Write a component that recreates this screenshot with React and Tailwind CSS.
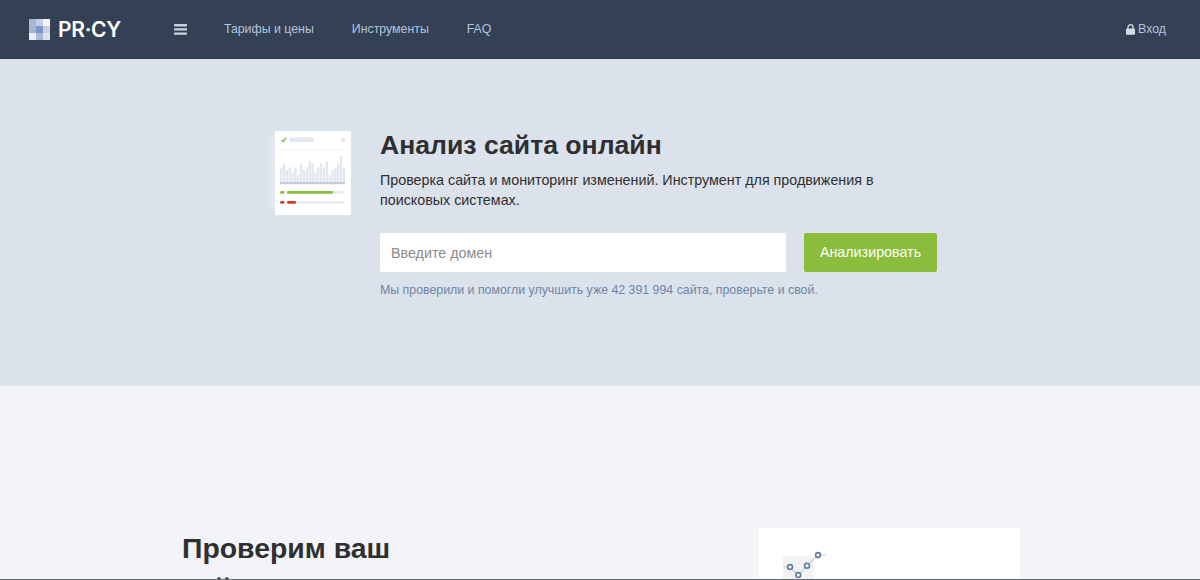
import React from 'react';

// bar heights of the small chart on the hero picture
const bars = [14.5, 18.5, 12, 14.5, 9.5, 14.5, 7, 18.5, 12, 14.5, 21, 18.5, 9.5, 14.5, 18.5, 14.5, 21, 7, 12, 14.5, 18.5, 26, 14.5];

const LogoMark = () => (
    <svg width="21" height="21" viewBox="0 0 21 21" className="shrink-0">
        <rect x="0" y="0" width="7" height="7" fill="#a9b7d6" />
        <rect x="7" y="0" width="7" height="7" fill="#c5cfe3" />
        <rect x="14" y="0" width="7" height="7" fill="#f4f6fa" />
        <rect x="0" y="7" width="7" height="7" fill="#a3b3d4" />
        <rect x="7" y="7" width="7" height="7" fill="#7d95c8" />
        <rect x="14" y="7" width="7" height="7" fill="#c9d2e5" />
        <rect x="0" y="14" width="7" height="7" fill="#e9edf4" />
        <rect x="7" y="14" width="7" height="7" fill="#a9b7d6" />
        <rect x="14" y="14" width="7" height="7" fill="#dde3ef" />
    </svg>
);

const HeroPicture = () => (
    <svg width="83" height="84" viewBox="0 0 83 84" className="shrink-0">
        <rect x="0" y="6" width="7" height="68" fill="#dfe5ee" />
        <rect x="3" y="3" width="4" height="74" fill="#e2e7f0" />
        <rect x="7" y="0" width="76" height="84" rx="1" fill="#ffffff" />
        <path d="M13.5 9 L15.2 10.5 L18 6.8" stroke="#8abd3b" strokeWidth="1.5" fill="none" />
        <rect x="21" y="6.5" width="25" height="4.5" rx="2.2" fill="#e3e8f0" />
        <circle cx="75" cy="9" r="2.2" fill="#e3e8f0" />
        <rect x="12" y="18" width="65" height="1" fill="#f3f5f8" />
        {bars.map((h, i) => (
            <rect key={i} x={12 + i * 2.85} y={51 - h} width="2.4" height={h} fill="#e3e7ef" />
        ))}
        <rect x="12" y="51" width="65" height="2.2" fill="#c5cdda" />
        <rect x="12" y="60" width="4.5" height="2.8" rx="1.4" fill="#8abd3b" />
        <rect x="19" y="60" width="58" height="2.8" rx="1.4" fill="#e6eaf1" />
        <rect x="19" y="60" width="46" height="2.8" rx="1.4" fill="#8abd3b" />
        <rect x="12" y="70" width="4.5" height="2.8" rx="1.4" fill="#d13f26" />
        <rect x="19" y="70" width="58" height="2.8" rx="1.4" fill="#e6eaf1" />
        <rect x="19" y="70" width="9" height="2.8" rx="1.4" fill="#d13f26" />
    </svg>
);

const ChartPicture = () => (
    <svg width="60" height="40" viewBox="0 0 60 40" className="mt-[23px] ml-[22px]">
        <rect x="2" y="5" width="30.5" height="35" rx="2" fill="#f2f2f3" />
        <path d="M2 16 L9 16 L17.3 24 L26 14.7 L37 4 L45 4" stroke="#c9d0d6" strokeWidth="1.2" fill="none" />
        <circle cx="9" cy="16" r="2.4" fill="#fff" stroke="#5f7c9e" strokeWidth="1.6" />
        <circle cx="17.3" cy="24" r="2.4" fill="#fff" stroke="#5f7c9e" strokeWidth="1.6" />
        <circle cx="26" cy="14.7" r="2.4" fill="#fff" stroke="#5f7c9e" strokeWidth="1.6" />
        <circle cx="37" cy="4" r="2.4" fill="#fff" stroke="#5f7c9e" strokeWidth="1.6" />
    </svg>
);

const Header = () => (
    <header className="h-[59px] bg-[#344154] flex items-center pl-[29px] pr-[34px] font-['Liberation_Sans',Arial,sans-serif]">
        <LogoMark />
        <span className="ml-[8px] text-[21px] leading-none font-semibold text-white font-['Inter',sans-serif] tracking-[-0.3px]">PR·CY</span>
        <svg width="13" height="11" viewBox="0 0 13 11" className="ml-[53px]">
            <rect y="0" width="13" height="2.4" rx="0.6" fill="#c9d3e0" />
            <rect y="4.2" width="13" height="2.4" rx="0.6" fill="#c9d3e0" />
            <rect y="8.4" width="13" height="2.4" rx="0.6" fill="#c9d3e0" />
        </svg>
        <nav className="flex items-center gap-[38px] ml-[37px] text-[12.35px] text-[#b5c4da]">
            <a>Тарифы и цены</a>
            <a>Инструменты</a>
            <a>FAQ</a>
        </nav>
        <a className="ml-auto flex items-center gap-[3px] text-[12.35px] text-[#b5c4da]">
            <svg width="9" height="11" viewBox="0 0 9 11">
                <path d="M2 5V3.2a2.5 2.5 0 0 1 5 0V5" stroke="#d5dce8" strokeWidth="1.3" fill="none" />
                <rect x="0" y="4.6" width="9" height="6.2" rx="1" fill="#d5dce8" />
            </svg>
            Вход
        </a>
    </header>
);

const Hero = () => (
    <section className="h-[327px] bg-[#dbe2ec] flex justify-center font-['Liberation_Sans',Arial,sans-serif]">
        <div className="w-[669px] ml-[5px] flex gap-[29px] pt-[72px]">
            <HeroPicture />
            <div className="flex-1">
                <h1 className="text-[26.6px] leading-[30px] font-bold text-[#2f2f2f] mt-[-1px]">Анализ сайта онлайн</h1>
                <p className="mt-[10px] w-[520px] text-[14.3px] leading-[20px] text-[#2f2f2f]">
                    Проверка сайта и мониторинг изменений. Инструмент для продвижения в поисковых системах.
                </p>
                <div className="mt-[23px] flex gap-[18px]">
                    <input
                        placeholder="Введите домен"
                        className="w-[406px] h-[39px] rounded-[2px] bg-white px-[11px] text-[14.3px] outline-none placeholder:text-[#8a8a8a]"
                    />
                    <button className="w-[133px] h-[39px] rounded-[2px] bg-[#8abd3b] text-[14.3px] text-white">
                        Анализировать
                    </button>
                </div>
                <p className="mt-[10px] text-[12.35px] leading-[17px] text-[#6d86a6]">
                    Мы проверили и помогли улучшить уже 42 391 994 сайта, проверьте и свой.
                </p>
            </div>
        </div>
    </section>
);

const Section = () => (
    <section className="flex-1 bg-[#f2f4f8] flex justify-center overflow-hidden font-['Liberation_Sans',Arial,sans-serif]">
        <div className="w-[838px] ml-[2px] flex justify-between pt-[142px]">
            <h2 className="text-[28.4px] leading-[40px] font-bold text-[#2f2f2f]">
                Проверим ваш<br />сайт
            </h2>
            <div className="w-[261px] h-[300px] bg-white">
                <ChartPicture />
            </div>
        </div>
    </section>
);

export default function App() {
    return (
        <div className="h-[580px] flex flex-col overflow-hidden relative">
            <Header />
            <Hero />
            <Section />
            {/* thin dark strip along the bottom edge of the shot */}
            <div className="absolute left-0 right-0 bottom-0 h-[1.5px] bg-[#666a6e]" />
        </div>
    );
}
